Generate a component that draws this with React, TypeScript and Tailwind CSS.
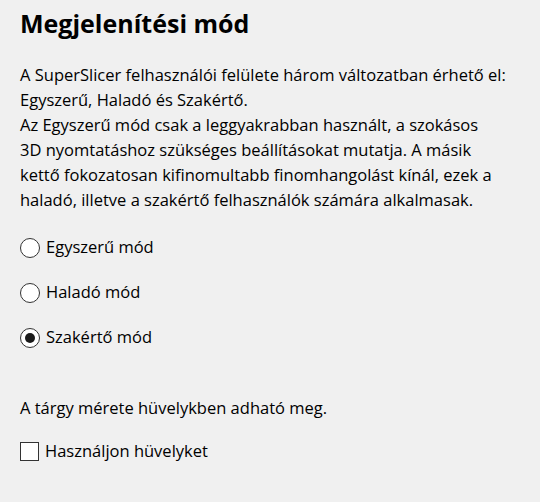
import React from 'react';

const modes = ['Egyszerű mód', 'Haladó mód', 'Szakértő mód'];

export default function App() {
  const [mode, setMode] = React.useState(2);
  const [inches, setInches] = React.useState(false);

  return (
    <div className="min-h-[502px] w-[540px] bg-[#f0f0f0] px-5 pt-[7px] text-black font-['Open_Sans',sans-serif]">
      <h1 className="text-[25px] leading-[32px] font-bold">Megjelenítési mód</h1>

      <p className="mt-[23px] text-[16.5px] leading-[25px] whitespace-nowrap">
        A SuperSlicer felhasználói felülete három változatban érhető el:
        <br />
        Egyszerű, Haladó és Szakértő.
        <br />
        Az Egyszerű mód csak a leggyakrabban használt, a szokásos
        <br />
        3D nyomtatáshoz szükséges beállításokat mutatja. A másik
        <br />
        kettő fokozatosan kifinomultabb finomhangolást kínál, ezek a
        <br />
        haladó, illetve a szakértő felhasználók számára alkalmasak.
      </p>

      {/* Mode radios */}
      <div className="mt-[13px] flex flex-col">
        {modes.map((label, i) => (
          <label key={label} className="flex h-[45px] items-center gap-[6px] text-[16.5px] cursor-default" onClick={() => setMode(i)}>
            <span className="flex h-[20px] w-[20px] items-center justify-center rounded-full border border-[#333] bg-white">
              {mode === i && <span className="h-[10px] w-[10px] rounded-full bg-[#1a1a1a]" />}
            </span>
            <span>{label}</span>
          </label>
        ))}
      </div>

      <p className="mt-[35px] text-[16.5px] leading-[25px]">A tárgy mérete hüvelykben adható meg.</p>

      <label className="mt-[19px] flex h-[25px] items-center gap-[6px] text-[16.5px] cursor-default" onClick={() => setInches(!inches)}>
        <span className="flex h-[19px] w-[19px] items-center justify-center border border-[#333] bg-white text-[14px] leading-none">
          {inches ? '✓' : ''}
        </span>
        <span>Használjon hüvelyket</span>
      </label>
    </div>
  );
}
